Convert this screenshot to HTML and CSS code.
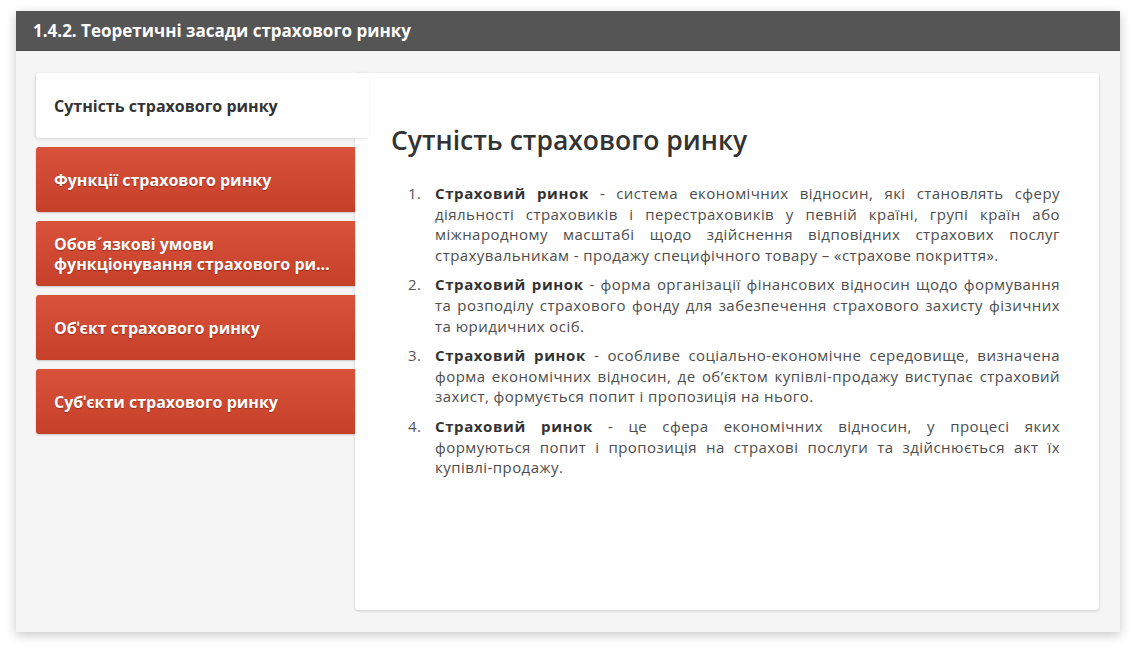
FILE: index.html
```html
<!DOCTYPE html>
<html lang="uk">
<head>
<meta charset="utf-8">
<title>1.4.2. Теоретичні засади страхового ринку</title>
<link rel="stylesheet" href="styles.css">
</head>
<body>
<div class="window">
  <div class="header">1.4.2. Теоретичні засади страхового ринку</div>
  <div class="body">
    <div class="tabs">
      <div class="tab active">Сутність страхового ринку</div>
      <div class="tab"><span class="label">Функції страхового ринку</span></div>
      <div class="tab"><span class="label"><span class="line">Обов´язкові умови</span><span class="line">функціонування страхового ринку</span></span></div>
      <div class="tab"><span class="label">Обˈєкт страхового ринку</span></div>
      <div class="tab"><span class="label">Субˈєкти страхового ринку</span></div>
    </div>
    <div class="panel">
      <h1 class="title">Сутність страхового ринку</h1>
      <ol class="list">
        <li><b>Страховий ринок</b> - система економічних відносин, які становлять сферу діяльності страховиків і перестраховиків у певній країні, групі країн або міжнародному масштабі щодо здійснення відповідних страхових послуг страхувальникам - продажу специфічного товару – «страхове покриття».</li>
        <li><b>Страховий ринок</b> - форма організації фінансових відносин щодо формування та розподілу страхового фонду для забезпечення страхового захисту фізичних та юридичних осіб.</li>
        <li><b>Страховий ринок</b> - особливе соціально-економічне середовище, визначена форма економічних відносин, де об’єктом купівлі-продажу виступає страховий захист, формується попит і пропозиція на нього.</li>
        <li><b>Страховий ринок</b> - це сфера економічних відносин, у процесі яких формуються попит і пропозиція на страхові послуги та здійснюється акт їх купівлі-продажу.</li>
      </ol>
    </div>
  </div>
</div>
</body>
</html>
```

FILE: styles.css
```css
html, body {
  margin: 0;
  padding: 0;
  background: #ffffff;
}
body {
  padding: 11px 16px 21px 16px;
  font-family: "Open Sans", "Noto Sans", sans-serif;
}
.window {
  width: 1104px;
  height: 621px;
  background: #f5f5f5;
  box-shadow: 0 3px 10px rgba(0,0,0,0.22);
  display: flex;
  flex-direction: column;
}
.header {
  height: 40px;
  flex: none;
  box-sizing: border-box;
  background: #555555;
  border-bottom: 1px solid #4a4a4a;
  color: #ffffff;
  font-weight: 700;
  font-size: 17px;
  line-height: 40px;
  padding-left: 17px;
}
.body {
  flex: 1;
  display: flex;
  padding: 22px 21px 22px 20px;
}
.tabs {
  width: 319px;
  flex: none;
  display: flex;
  flex-direction: column;
  gap: 9px;
  position: relative;
  z-index: 2;
}
.tab {
  height: 65px;
  box-sizing: border-box;
  display: flex;
  align-items: center;
  padding: 0 18px;
  border-radius: 3px 0 0 3px;
  background: linear-gradient(#d9533c, #c63f29);
  color: #ffffff;
  font-weight: 700;
  font-size: 16px;
  line-height: 20px;
  text-shadow: 0 1px 1px rgba(80,0,0,0.4);
  box-shadow: 0 1px 2px rgba(0,0,0,0.2);
}
.tab.active {
  background: #ffffff;
  color: #333333;
  text-shadow: none;
  margin-right: -14px;
  border-radius: 3px 0 0 3px;
  box-shadow: -1px 1px 3px rgba(0,0,0,0.12);
}
.label {
  display: block;
  width: 100%;
  min-width: 0;
}
.line {
  display: block;
  white-space: nowrap;
  overflow: hidden;
  text-overflow: ellipsis;
}
.panel {
  flex: 1;
  background: #ffffff;
  border-radius: 0 3px 3px 3px;
  box-shadow: 0 1px 3px rgba(0,0,0,0.18);
  padding: 50px 39px 0 36px;
  color: #4d4d4d;
}
.title {
  margin: 0 0 26px 0;
  font-size: 26.5px;
  font-weight: 600;
  color: #333333;
  line-height: 34px;
}
.list {
  margin: 0;
  padding: 0 0 0 44px;
  list-style: none;
  counter-reset: item;
  font-size: 15px;
  letter-spacing: 0.45px;
  line-height: 20.6px;
  text-align: justify;
}
.list li {
  counter-increment: item;
  margin-bottom: 9px;
}
.list li::before {
  content: counter(item) ".";
  display: inline-block;
  width: 27px;
  margin-left: -27px;
  color: #555555;
}
.list b {
  color: #333333;
  letter-spacing: 0.6px;
}
```
